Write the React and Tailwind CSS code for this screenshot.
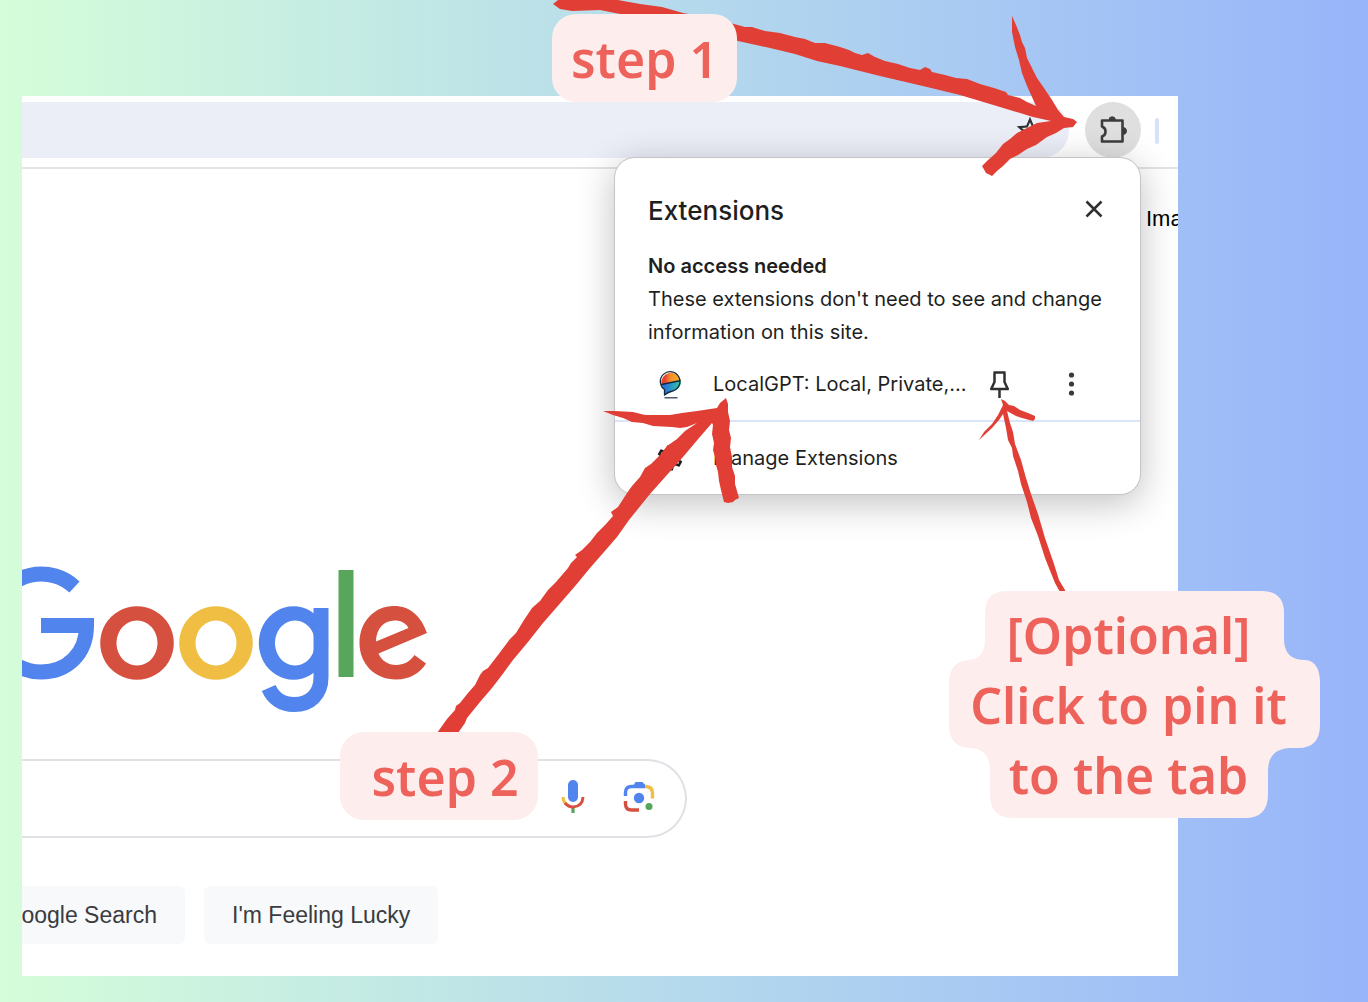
import React from "react";
import { MdStarBorder, MdOutlineSettings } from "react-icons/md";

function GoogleLogo() {
  return (
    <svg role="img" aria-label="Google" viewBox="22 564 410 152" className="block h-[152px] w-[410px]">
      <path
        d="M74.5 587A49 49 0 1 0 41 672C67 672 86.500 654 86.500 625.500H41"
        fill="none"
        stroke="#5184ec"
        strokeWidth="15"
      />
      <path
        fillRule="evenodd"
        fill="#d6503f"
        d="M137 606.200a36.800 36.800 0 1 0 .01 0ZM137 620.500a20.500 22.500 0 1 1-.01 0Z"
      />
      <path
        fillRule="evenodd"
        fill="#efbe42"
        d="M216 606.200a36.800 36.800 0 1 0 .01 0ZM216 620.500a20.500 22.500 0 1 1-.01 0Z"
      />
      <path
        fillRule="evenodd"
        fill="#5184ec"
        d="M293.500 606.200a34.700 36.800 0 1 0 .01 0ZM295 620.500a20 22.500 0 1 1-.01 0Z"
      />
      <path
        d="M321 608V677C321 694.500 310 704.500 294 704.500C281.500 704.500 273 698 268.700 688"
        fill="none"
        stroke="#5184ec"
        strokeWidth="15"
      />
      <rect x="338.500" y="570" width="15" height="107" fill="#58a55c" />
      <path
        fillRule="evenodd"
        fill="#d6503f"
        d="M427 633C421 616 410 606 394 606C374 606 359.500 622 359.500 643C359.500 664 375 679.500 396 679.500C410 679.500 420 673 426 663.500L414.500 655C410 661.500 404 665 396 665C388 665 382 661 378.500 653.500ZM376 641.500L408.500 628C406 623 401 620.500 394.500 620.500C384 620.500 376 629 376 641.500Z"
      />
    </svg>
  );
}

function PuzzleIcon() {
  return (
    <svg viewBox="0 0 32 32" className="size-8" aria-hidden="true">
      <path
        d="M5 6.500H25.500V27.500H5V22.500a5.300 5.300 0 0 0 0-10Z"
        fill="none"
        stroke="#3c3c3c"
        strokeWidth="2.600"
        strokeLinejoin="round"
      />
      <path d="M12 6a3.200 3.200 0 0 1 6.400 0ZM26 13.500a3.400 3.400 0 0 1 0 7Z" fill="#3c3c3c" stroke="#3c3c3c" />
    </svg>
  );
}

function CloseIcon() {
  return (
    <svg viewBox="0 0 20 20" className="size-5" aria-hidden="true">
      <path d="M2.500 1.500l15 15M17.500 1.500l-15 15" stroke="#303030" strokeWidth="2.500" />
    </svg>
  );
}

function PinIcon() {
  return (
    <svg viewBox="0 0 24 32" className="h-8 w-6" aria-hidden="true">
      <path
        d="M5.500 4.500H17.500M6.500 4.500V14L3.200 21H19.800L16.500 14V4.500M11.500 21V30"
        fill="none"
        stroke="#303030"
        strokeWidth="2.500"
        strokeLinejoin="round"
      />
    </svg>
  );
}

function DotsIcon() {
  return (
    <svg viewBox="0 0 8 28" className="h-7 w-2" aria-hidden="true" fill="#3a3a3a">
      <circle cx="3.500" cy="5" r="2.600" />
      <circle cx="3.500" cy="14" r="2.600" />
      <circle cx="3.500" cy="23" r="2.600" />
    </svg>
  );
}

function LocalGptIcon() {
  return (
    <svg viewBox="0 0 28 32" className="h-8 w-7" aria-hidden="true">
      <defs>
        <linearGradient id="warm" x1="0" x2="1">
          <stop offset="0.200" stopColor="#e8432f" />
          <stop offset="0.450" stopColor="#f58a2c" />
          <stop offset="1" stopColor="#f7b52c" />
        </linearGradient>
        <linearGradient id="cool" x1="0" x2="1">
          <stop offset="0.200" stopColor="#2878d8" />
          <stop offset="1" stopColor="#32c9a0" />
        </linearGradient>
      </defs>
      <path d="M4.500 16.500A9.800 9.800 0 1 1 23.700 12.500L14 14.300Z" fill="url(#warm)" />
      <path d="M4.500 16.500L14 14.300L23.700 12.500C24.500 18.500 21 22 15.500 23Q11 24 7.500 27V21.500Q5 19.500 4.500 16.500Z" fill="url(#cool)" />
      <path
        d="M7.500 21.500A9.800 9.800 0 1 1 15.500 23Q11 24 7.500 27ZM4.500 16.500L23.700 12.500"
        fill="none"
        stroke="#14283f"
        strokeWidth="1.300"
        strokeLinejoin="round"
      />
      <path d="M7.500 29.800H20.500" stroke="#4d5a68" strokeWidth="1.400" />
    </svg>
  );
}

function MicIcon() {
  return (
    <svg viewBox="0 0 26 36" className="h-9 w-[26px]" aria-hidden="true" fill="none">
      <rect x="8" y="1" width="10" height="22" rx="5" fill="#5184ec" />
      <path d="M13 28v6" stroke="#58a55c" strokeWidth="3.200" />
      <path d="M3 18q0 4.500 3 7" stroke="#efbe42" strokeWidth="3" />
      <path d="M5 24Q8.500 28 13 28Q22.500 27.500 23 18" stroke="#d6503f" strokeWidth="3" />
    </svg>
  );
}

function LensIcon() {
  return (
    <svg viewBox="0 0 32 32" className="size-8" aria-hidden="true" fill="none">
      <path d="M2.500 15V11.500q0-6 6-6H22" stroke="#5184ec" strokeWidth="3.400" />
      <path d="M9.500 6l3-5h7L24 6Z" fill="#5184ec" />
      <path d="M22 5.500q7.500 0 7.500 6.500V17.500" stroke="#efbe42" strokeWidth="3.400" />
      <path d="M2.500 20v3q0 6 6 6H16" stroke="#d6503f" strokeWidth="3.400" />
      <circle cx="16" cy="17" r="5.200" fill="#5184ec" />
      <circle cx="26" cy="25.500" r="3.500" fill="#58a55c" />
    </svg>
  );
}

function Arrows() {
  return (
    <svg
      viewBox="0 0 1368 1002"
      className="pointer-events-none absolute top-0 right-0 h-[1002px] w-[1368px] max-w-none"
      aria-hidden="true"
      fill="#e13f35"
    >
      <path d="M553 4L558 0H618L640 4L662 7L683 13L700 16L734 24L745 27L752 27L765 31L780 33L795 37L805 39L815 43L825 43L840 47L849 50L855 53L862 55L868 53L875 57L885 61L898 64L910 68L920 70L925 67L930 69L932 72L945 75L956 78L967 79L980 84L994 88L1006 92L1008 95L1020 98L1027 102L1036 106L1032 97L1027 86L1022 73L1019 60L1015 47L1012 32L1012 16L1016 25L1020 35L1022 42L1025 48L1027 58L1031 66L1037 78L1044 88L1052 100L1058 110L1064 117L1073 119L1077 122L1073 127L1064 128L1056 133L1047 137L1036 145L1027 149L1018 155L1010 159L1003 166L997 171L992 176L986 173L982 166L987 161L996 153L1003 144L1010 139L1017 133L1027 128L1037 123L1051 121L1033 117L1000 107L960 95L927 87L880 76L860 71L840 66L817 61L795 54L770 48L738 41L690 28L600 10L572 11L560 9Z" />
      <path d="M603 411L615 411L633 412L645 415L657 415L670 415L682 413L697 411L717 408L720 403L726 398L728 404L728 412L730 421L729 430L731 438L730 447L732 457L732 467L735 476L735 484L739 498L735 500L733 502L728 503L724 502L721 490L719 481L718 472L716 465L715 457L713 450L714 443L712 434L713 425L712 423L699 438L683 457L666 476L650 494L629 520L617 537L604 552L590 568L576 585L563 600L543 623L528 642L513 660L502 675L492 688L480 702L467 718L465 723L458 733H437L447 719L455 710L456 706L460 703L468 693L475 685L480 675L483 671L488 668L498 655L510 639L516 633L524 620L532 608L540 601L548 590L556 582L568 568L571 563L577 557L575 555L582 550L590 542L597 533L606 524L613 516L611 512L618 507L627 493L632 486L640 477L645 468L651 464L660 455L667 446L677 439L685 431L697 423L687 427L680 428L672 427L653 426L643 423L632 422L623 418L613 415Z" />
      <path d="M1001 399L1005 401L1009 405L1014 406L1020 410L1028 413L1035 416L1035 419L1033 421L1022 418L1016 416L1007 411L1010 423L1013 432L1015 444L1021 460L1026 478L1031 494L1038 514L1045 538L1054 564L1059 580L1065 590V592H1060L1055 583L1045 558L1038 536L1031 518L1027 502L1021 484L1018 471L1014 459L1013 456L1012 448L1008 440L1006 428L1003 414L999 420L992 428L979 440L984 432L992 424L998 415L1003 405Z" />
    </svg>
  );
}

function StepLabel({ children, className }) {
  return (
    <div
      className={
        "absolute flex h-[88px] items-center justify-center rounded-3xl bg-[#fdeeed] font-['Noto_Sans',sans-serif] text-[50px] font-semibold whitespace-nowrap text-[#ee625c] " +
        className
      }
    >
      {children}
    </div>
  );
}

function PinNote() {
  return (
    <div className="absolute top-[591px] right-12 w-[371px] pt-[9px] pr-3 text-center font-['Noto_Sans',sans-serif] text-[50px] leading-[70px] font-semibold whitespace-nowrap text-[#ee625c]">
      <svg viewBox="0 0 371 227" className="absolute top-0 left-0 h-[227px] w-[371px]" aria-hidden="true">
        <path
          d="M58 0H313Q335 0 335 22V48Q335 69 356 69Q371 70 371 92V134Q371 157 349 157H341Q319 158 319 180V203Q319 227 296 227H64Q41 227 41 203V180Q41 157 20 157Q0 156 0 134V92Q0 70 20 69Q36 68 36 48V22Q36 0 58 0Z"
          fill="#fdeeed"
        />
      </svg>
      <p className="relative">
        [Optional]
        <br />
        Click to pin it
        <br />
        to the tab
      </p>
    </div>
  );
}

function ExtensionsPopover() {
  return (
    <section
      aria-label="Extensions"
      className="absolute top-[62px] right-[38px] w-[525px] overflow-hidden rounded-[20px] bg-white font-['Inter',sans-serif] text-[20px] text-[#1f1f1f] shadow-[0_0_0_1px_#c4c4c6,0_8px_36px_2px_rgba(0,0,0,0.240)]"
    >
      <div className="px-[33px] pt-8">
        <header className="flex h-10 items-center justify-between">
          <h2 className="text-[26px] font-medium">Extensions</h2>
          <button type="button" aria-label="Close" className="mr-[3px]">
            <CloseIcon />
          </button>
        </header>
        <h3 className="mt-5 leading-[33px] font-semibold">No access needed</h3>
        <p className="leading-[33px] whitespace-nowrap">
          These extensions don't need to see and change
          <br />
          information on this site.
        </p>
      </div>
      <div className="flex h-[71px] items-center pr-16 pb-[2px] pl-[42px]">
        <button type="button" className="flex flex-1 items-center gap-7 whitespace-nowrap">
          <LocalGptIcon />
          <span>LocalGPT: Local, Private,...</span>
        </button>
        <button type="button" aria-label="Pin" className="mr-[56px]">
          <PinIcon />
        </button>
        <button type="button" aria-label="More options">
          <DotsIcon />
        </button>
      </div>
      <button
        type="button"
        className="flex h-[74px] w-full items-center gap-[28px] border-t-2 border-[#dbe5f9] pl-10"
      >
        <MdOutlineSettings className="size-[30px]" aria-hidden="true" />
        <span>Manage Extensions</span>
      </button>
    </section>
  );
}

export default function App() {
  return (
    <div className="relative min-h-screen overflow-hidden bg-linear-to-r from-[#d5fdd9] to-[#98b4fa] pt-24 pr-[190px] pb-[26px] pl-[22px]">
      <main className="relative bg-white font-['Liberation_Sans',sans-serif]">
        <div className="overflow-hidden pb-8">
          <div className="flex h-[73px] items-start border-b-2 border-[#e3e3e5] pt-[6px]">
            <div className="flex h-14 flex-1 items-center justify-end rounded-r-full bg-[#ebeef7] pr-[23px]">
              <button type="button" aria-label="Bookmark this tab">
                <MdStarBorder className="size-8 text-[#303030]" />
              </button>
            </div>
            <button
              type="button"
              aria-label="Extensions"
              className="ml-4 flex size-14 items-center justify-center rounded-full bg-[#dfdfdf]"
            >
              <PuzzleIcon />
            </button>
            <div className="mt-4 mr-[19px] ml-[14px] h-[26px] w-[4px] rounded-full bg-[#d5e2fb]" />
          </div>
          <nav className="flex h-[100px] justify-end">
            <a href="#images" className="w-8 overflow-hidden text-[22px] leading-[100px] whitespace-nowrap text-black">
              Images
            </a>
          </nav>
          <div className="pt-[295px]">
            <GoogleLogo />
          </div>
          <form className="mt-[43px]" onSubmit={(e) => e.preventDefault()}>
            <div className="flex h-[79px] w-[665px] items-center rounded-r-full border-2 border-l-0 border-[#dfe1e5] pr-[30px] pb-1">
              <input type="text" aria-label="Search" className="h-full min-w-0 flex-1 outline-none" />
              <button type="button" aria-label="Search by voice">
                <MicIcon />
              </button>
              <button type="button" aria-label="Search by image" className="ml-[37px]">
                <LensIcon />
              </button>
            </div>
            <div className="mt-12 flex h-[58px] gap-[19px] text-[23px] text-[#3a3c40]">
              <button
                type="submit"
                className="flex w-[163px] items-center justify-end rounded-r-md bg-[#f8f9fb] pr-7 whitespace-nowrap"
              >
                Google Search
              </button>
              <button type="submit" className="rounded-md bg-[#f8f9fb] px-7 whitespace-nowrap">
                I'm Feeling Lucky
              </button>
            </div>
          </form>
        </div>
        <ExtensionsPopover />
      </main>
      <Arrows />
      <StepLabel className="top-[14px] right-[631px] w-[185px] pt-[2px]">step 1</StepLabel>
      <StepLabel className="top-[732px] right-[830px] w-[198px] pt-[2px] pl-3">step 2</StepLabel>
      <PinNote />
    </div>
  );
}
